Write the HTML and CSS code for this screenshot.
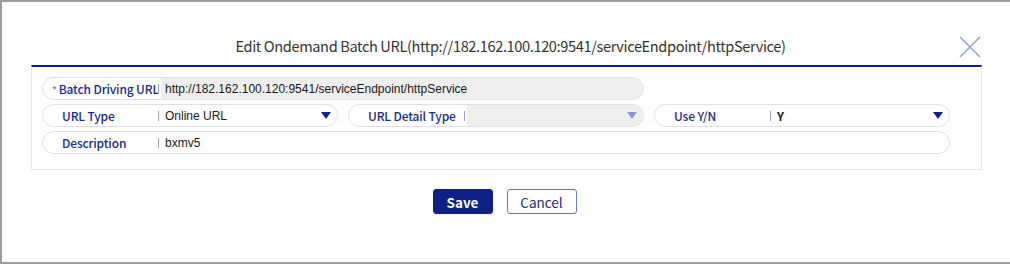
FILE: index.html
```html
<!DOCTYPE html>
<html>
<head>
<meta charset="utf-8">
<link rel="stylesheet" href="styles.css">
</head>
<body>
<div class="frame">
  <div class="header">
    <h1 class="title">Edit Ondemand Batch URL(http://182.162.100.120:9541/serviceEndpoint/httpService)</h1>
    <button class="close" aria-label="close">
      <svg width="22" height="22" viewBox="0 0 22 22"><path d="M1 1 L21 21 M21 1 L1 21" stroke="#8e98d2" stroke-width="1.4" fill="none"/></svg>
    </button>
  </div>
  <div class="panel">
    <div class="form">
      <div class="field row1">
        <span class="label"><span class="req">*</span>Batch Driving URL</span>
        <span class="sep"></span>
        <span class="value readonly">http://182.162.100.120:9541/serviceEndpoint/httpService</span>
      </div>
      <div class="field col1">
        <span class="label pad">URL Type</span>
        <span class="sep"></span>
        <span class="value select">Online URL<span class="caret"></span></span>
      </div>
      <div class="field">
        <span class="label pad">URL Detail Type</span>
        <span class="sep"></span>
        <span class="value select readonly"><span class="caret light"></span></span>
      </div>
      <div class="field">
        <span class="label pad">Use Y/N</span>
        <span class="sep"></span>
        <span class="value select bold">Y<span class="caret"></span></span>
      </div>
      <div class="field span3">
        <span class="label pad">Description</span>
        <span class="sep"></span>
        <span class="value">bxmv5</span>
      </div>
    </div>
  </div>
  <div class="actions">
    <button class="btn primary">Save</button>
    <button class="btn secondary">Cancel</button>
  </div>
</div>
</body>
</html>
```

FILE: styles.css
```css
html, body {
  margin: 0;
  padding: 0;
  background: #fff;
}

.frame {
  width: 1010px;
  height: 264px;
  box-sizing: border-box;
  border: 2px solid #9e9e9e;
  border-right: none;
  padding: 0 28px 0 29px;
  font-family: "Noto Sans CJK KR", "Noto Sans", sans-serif;
}

.header {
  position: relative;
  height: 63px;
  display: flex;
  justify-content: center;
  align-items: flex-start;
}

.title {
  margin: 34px 0 0 8px;
  font-size: 14.6px;
  font-weight: 400;
  color: #333;
  line-height: 20px;
  letter-spacing: -0.38px;
}

.close {
  position: absolute;
  right: 1px;
  top: 34px;
  width: 22px;
  height: 22px;
  padding: 0;
  border: none;
  background: none;
}

.close svg {
  display: block;
}

.panel {
  border-top: 2px solid #0b1f8c;
  border-left: 1px solid #e8e8e8;
  border-right: 1px solid #e8e8e8;
  border-bottom: 1px solid #e8e8e8;
  padding: 10px 10px 15px;
}

.form {
  display: grid;
  grid-template-columns: 296px 296px 296px;
  column-gap: 10px;
  row-gap: 4px;
}

.field {
  height: 23px;
  box-sizing: border-box;
  border: 1px solid #e0e0e0;
  border-radius: 12px;
  display: flex;
  align-items: center;
  overflow: hidden;
}

.row1 { grid-column: 1 / 3; }
.col1 { grid-column: 1; }
.span3 { grid-column: 1 / 4; }

.label {
  width: 106px;
  flex: none;
  padding-left: 9px;
  font-size: 12px;
  font-weight: 500;
  letter-spacing: -0.15px;
  color: #1a2a86;
  white-space: nowrap;
}

.label.pad {
  padding-left: 19px;
  width: 96px;
}

.req {
  color: #6c78c4;
  font-size: 10px;
  margin-right: 2px;
}

.sep {
  width: 1px;
  height: 10px;
  background: #9aa0d0;
  flex: none;
}

.value {
  flex: 1;
  height: 100%;
  display: flex;
  align-items: center;
  padding-left: 6px;
  font-family: "Liberation Sans", Arial, sans-serif;
  font-size: 12px;
  color: #1a1a1a;
}

.value.readonly {
  background: #eeeeee;
  margin-left: 2px;
  padding-left: 4px;
}

.value.select {
  justify-content: space-between;
  padding-right: 6px;
}

.value.bold {
  font-weight: 700;
  font-family: "Noto Sans CJK KR", "Noto Sans", sans-serif;
  color: #222;
}

.caret {
  width: 0;
  height: 0;
  border-left: 5px solid transparent;
  border-right: 5px solid transparent;
  border-top: 7px solid #0f2288;
  margin-left: auto;
}

.caret.light {
  border-top-color: #8c93cf;
}

.actions {
  display: flex;
  justify-content: center;
  gap: 14px;
  margin-top: 19px;
  padding-right: 4px;
}

.btn {
  height: 25px;
  box-sizing: border-box;
  border-radius: 3px;
  font-family: "Noto Sans CJK KR", "Noto Sans", sans-serif;
  font-size: 13.5px;
  padding: 0;
  line-height: 20px;
}

.primary {
  width: 60px;
  background: #0c2286;
  border: 1px solid #0c2286;
  color: #fff;
  font-weight: 700;
}

.secondary {
  width: 70px;
  background: #fff;
  border: 1px solid #6d78c2;
  color: #1a2a86;
  font-weight: 400;
}
```
